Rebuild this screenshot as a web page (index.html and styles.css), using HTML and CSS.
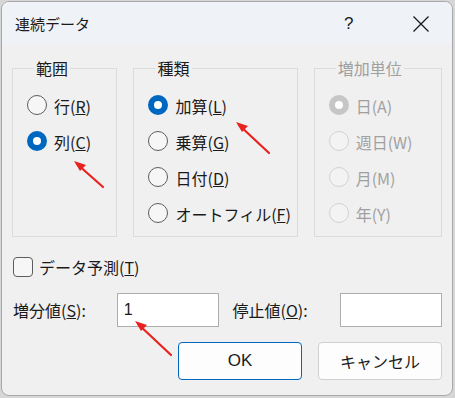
FILE: index.html
```html
<!DOCTYPE html>
<html lang="ja">
<head>
    <meta charset="UTF-8">
    <title>連続データ</title>
    <link rel="stylesheet" href="styles.css">
</head>
<body>
    <div class="dialog">
        <div class="titlebar">
            <span class="title">連続データ</span>
            <span class="help">?</span>
            <span class="close">
                <svg width="18" height="18" viewBox="0 0 18 18"><path d="M1.5 1.5 L16.5 16.5 M16.5 1.5 L1.5 16.5" stroke="#1a1a1a" stroke-width="1.3" fill="none"/></svg>
            </span>
        </div>
        <div class="content">
            <div class="groups">
                <fieldset class="group group-range">
                    <legend>範囲</legend>
                    <div class="option"><span class="radio"></span><span>行(<u>R</u>)</span></div>
                    <div class="option"><span class="radio checked"></span><span>列(<u>C</u>)</span></div>
                </fieldset>
                <fieldset class="group group-type">
                    <legend>種類</legend>
                    <div class="option"><span class="radio checked"></span><span>加算(<u>L</u>)</span></div>
                    <div class="option"><span class="radio"></span><span>乗算(<u>G</u>)</span></div>
                    <div class="option"><span class="radio"></span><span>日付(<u>D</u>)</span></div>
                    <div class="option"><span class="radio"></span><span>オートフィル(<u>F</u>)</span></div>
                </fieldset>
                <fieldset class="group group-unit disabled">
                    <legend>増加単位</legend>
                    <div class="option"><span class="radio checked"></span><span>日(A)</span></div>
                    <div class="option"><span class="radio"></span><span>週日(W)</span></div>
                    <div class="option"><span class="radio"></span><span>月(M)</span></div>
                    <div class="option"><span class="radio"></span><span>年(Y)</span></div>
                </fieldset>
            </div>
            <div class="check-row"><span class="checkbox"></span><span>データ予測(<u>T</u>)</span></div>
            <div class="value-row">
                <span class="field-label">増分値(<u>S</u>):</span>
                <div class="textbox">1</div>
                <span class="field-label stop-label">停止値(<u>O</u>):</span>
                <div class="textbox"></div>
            </div>
            <div class="button-row">
                <button class="btn btn-ok">OK</button>
                <button class="btn">キャンセル</button>
            </div>
        </div>
    </div>

    <svg class="arrows" width="455" height="398" viewBox="0 0 455 398">
        <g stroke="#e8221e" stroke-width="2.2" fill="none" stroke-linecap="round">
            <path d="M103 187 L77 164"/>
            <path d="M269 153 L239 125"/>
            <path d="M171 355 L138 324"/>
        </g>
        <g fill="#e8221e">
            <path d="M74 161 L86 165 L80 171 Z"/>
            <path d="M236 122 L248 126 L242 132 Z"/>
            <path d="M135 321 L147 325 L141 331 Z"/>
        </g>
    </svg>
</body>
</html>
```

FILE: styles.css
```css
* { box-sizing: border-box; }
body {
    margin: 0;
    width: 455px;
    height: 398px;
    background: #d6d6d6;
    font-family: "Noto Sans CJK JP", "Noto Sans", sans-serif;
    font-size: 15px;
    color: #1a1a1a;
    position: relative;
    overflow: hidden;
}
.dialog {
    margin: 1px 0 0 1px;
    width: 452px;
    height: 395px;
    background: #f0f0f0;
    border: 1px solid #a9a9a9;
    border-radius: 8px;
    overflow: hidden;
}
.titlebar {
    height: 43px;
    background: #eff3f8;
    display: flex;
    align-items: center;
    padding-left: 13px;
}
.title { font-size: 15px; flex: 1; }
.help { font-family: "Liberation Sans", sans-serif; font-size: 17px; width: 68px; }
.close { width: 40px; display: flex; }

.content { padding: 12px 10px 0 10px; }
.groups { display: flex; gap: 16px; }
.group {
    margin: 0;
    border: 1px solid #dcdcdc;
    border-radius: 0;
    padding: 8px 0 10px 14px;
    height: 180px;
}
.group legend {
    font-size: 16px;
    padding: 0 2px;
    margin-left: 7px;
    line-height: 22px;
}
.group-range { width: 106px; }
.group-type { width: 165px; }
.group-unit { width: 129px; }

.option {
    height: 36px;
    display: flex;
    align-items: center;
    gap: 7px;
    font-size: 16px;
    white-space: nowrap;
}
.option span:last-child { padding-top: 2px; }
.radio {
    width: 20px;
    height: 20px;
    border-radius: 50%;
    border: 1px solid #5d5d5d;
    background: #f6f6f6;
    flex: none;
}
.radio.checked {
    border: 6px solid #0067c0;
    background: #fff;
}
.disabled legend, .disabled .option { color: #a0a0a0; }
.disabled .radio { border-color: #d2d2d2; background: #f3f3f3; }
.disabled .radio.checked { border: 6px solid #c6c6c6; background: #fff; }

.check-row {
    display: flex;
    align-items: center;
    gap: 6px;
    margin-top: 18px;
    margin-left: 1px;
    font-size: 16px;
}
.checkbox {
    width: 20px;
    height: 20px;
    border: 1px solid #5d5d5d;
    border-radius: 4px;
    background: #f6f6f6;
}

.value-row {
    display: flex;
    align-items: center;
    margin-top: 14px;
    margin-left: 1px;
}
.field-label { font-size: 16px; width: 104px; }
.stop-label { width: 108px; margin-left: 14px; }
.textbox {
    width: 102px;
    height: 34px;
    background: #fff;
    border: 1px solid #adadad;
    font-family: "Liberation Sans", sans-serif;
    font-size: 16px;
    padding: 7px 6px 0;
}
.button-row {
    display: flex;
    gap: 16px;
    margin-top: 15px;
    margin-left: 166px;
}
.btn {
    width: 124px;
    height: 38px;
    background: #fdfdfd;
    border: 1px solid #d0d0d0;
    border-radius: 4px;
    font-family: "Noto Sans CJK JP", sans-serif;
    font-size: 16px;
    color: #1a1a1a;
}
.btn-ok { border-color: #0067c0; font-family: "Liberation Sans", sans-serif; font-size: 17px; }

.arrows { position: absolute; left: 0; top: 0; pointer-events: none; }
```
